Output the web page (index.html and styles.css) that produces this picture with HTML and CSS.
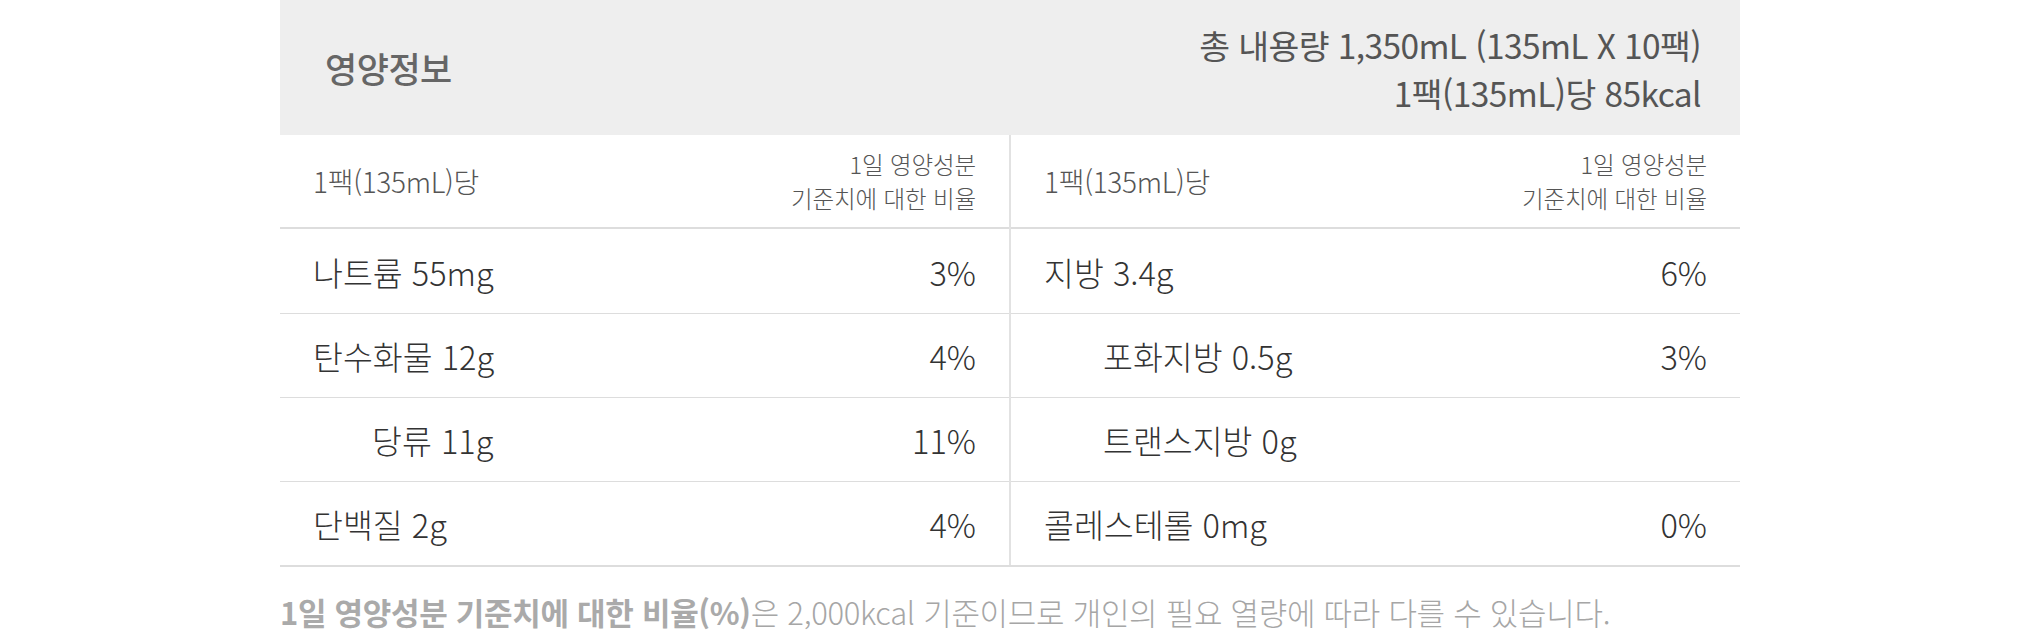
FILE: index.html
```html
<!DOCTYPE html>
<html lang="ko">
<head>
<meta charset="utf-8">
<link rel="stylesheet" href="styles.css">
</head>
<body>
<div class="nutrition">
  <div class="nt-head">
    <div class="nt-title">영양정보</div>
    <div class="nt-total">
      <div>총 내용량 1,350mL (135mL X 10팩)</div>
      <div>1팩(135mL)당 85kcal</div>
    </div>
  </div>
  <div class="nt-body">
    <div class="nt-col nt-col-left">
      <div class="nt-sub">
        <span class="nt-sub-left">1팩(135mL)당</span>
        <div class="nt-sub-right"><div>1일 영양성분</div><div>기준치에 대한 비율</div></div>
      </div>
      <div class="nt-row"><span>나트륨 55mg</span><span>3%</span></div>
      <div class="nt-row"><span>탄수화물 12g</span><span>4%</span></div>
      <div class="nt-row"><span class="indent">당류 11g</span><span>11%</span></div>
      <div class="nt-row"><span>단백질 2g</span><span>4%</span></div>
    </div>
    <div class="nt-col">
      <div class="nt-sub">
        <span class="nt-sub-left">1팩(135mL)당</span>
        <div class="nt-sub-right"><div>1일 영양성분</div><div>기준치에 대한 비율</div></div>
      </div>
      <div class="nt-row"><span>지방 3.4g</span><span>6%</span></div>
      <div class="nt-row"><span class="indent">포화지방 0.5g</span><span>3%</span></div>
      <div class="nt-row"><span class="indent">트랜스지방 0g</span><span></span></div>
      <div class="nt-row"><span>콜레스테롤 0mg</span><span>0%</span></div>
    </div>
  </div>
  <p class="nt-note"><strong>1일 영양성분 기준치에 대한 비율(%)</strong>은 2,000kcal 기준이므로 개인의 필요 열량에 따라 다를 수 있습니다.</p>
</div>
</body>
</html>
```

FILE: styles.css
```css
html, body {
  margin: 0;
  padding: 0;
  background: #ffffff;
}

body {
  font-family: "Noto Sans CJK KR", "Noto Sans", sans-serif;
  color: #333333;
}

.nutrition {
  width: 1460px;
  margin: 0 auto;
}

.nt-head {
  height: 135px;
  background: #eeeeee;
  display: flex;
  justify-content: space-between;
  align-items: center;
  padding: 0 39px 0 45px;
  box-sizing: border-box;
}

.nt-title {
  font-size: 35px;
  font-weight: 500;
  color: #666666;
  letter-spacing: -0.5px;
}

.nt-total {
  text-align: right;
  font-size: 33.5px;
  font-weight: 400;
  line-height: 48px;
  color: #555555;
  letter-spacing: -0.6px;
  padding-top: 2px;
}

.nt-body {
  display: flex;
  border-bottom: 2px solid #dddddd;
}

.nt-col {
  flex: 1 1 0;
}

.nt-col-left {
  border-right: 2px solid #e2e2e2;
}

.nt-sub {
  height: 92px;
  display: flex;
  justify-content: space-between;
  align-items: center;
  padding: 0 33px;
  border-bottom: 2px solid #dddddd;
  font-weight: 300;
  color: #555555;
}

.nt-sub-left {
  font-size: 28px;
  letter-spacing: -0.3px;
}

.nt-sub-right {
  text-align: right;
  font-size: 23.5px;
  line-height: 34px;
  letter-spacing: -0.1px;
}

.nt-row {
  height: 84px;
  display: flex;
  justify-content: space-between;
  align-items: center;
  padding: 0 33px;
  font-size: 32.5px;
  font-weight: 300;
  color: #333333;
  letter-spacing: 0;
  box-sizing: border-box;
}

.nt-row + .nt-row {
  border-top: 1px solid #dddddd;
}

.indent {
  padding-left: 59px;
}

.nt-note {
  margin: 27px 0 0;
  font-size: 31px;
  font-weight: 300;
  color: #a6a6a6;
  letter-spacing: -0.3px;
  line-height: 36px;
}

.nt-note strong {
  font-weight: 700;
  color: #aaaaaa;
}
```
